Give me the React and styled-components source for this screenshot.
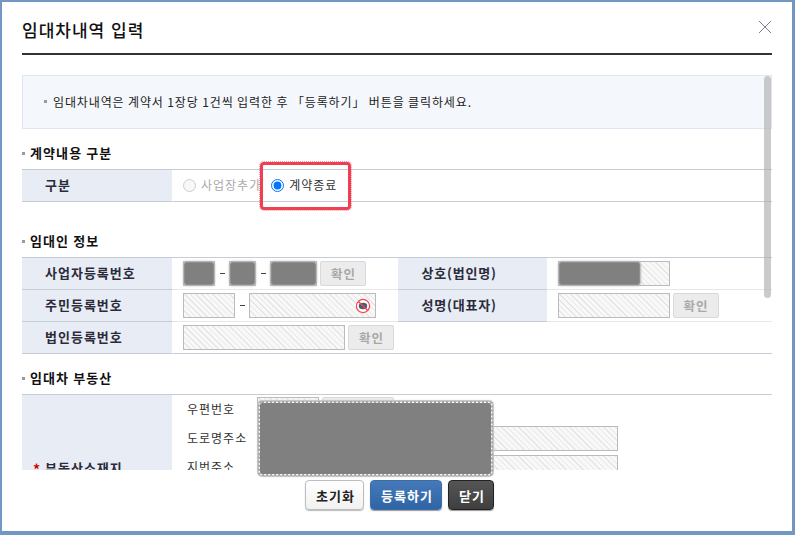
import React from 'react';
import styled, { createGlobalStyle } from 'styled-components';

const GlobalStyle = createGlobalStyle`
  html, body {
    margin: 0;
    padding: 0;
    background: #fff;
  }
  body {
    font-family: 'Noto Sans CJK KR', 'Noto Sans', sans-serif;
    font-size: 12px;
    color: #222;
  }
  * {
    box-sizing: border-box;
  }
`;

const App = () => {
  return (
    <Panel>
      <GlobalStyle />
      <Header>
        <Title>임대차내역 입력</Title>
        <CloseButton aria-label="닫기">
          <svg width="14" height="14" viewBox="0 0 14 14">
            <path d="M1 1L13 13M13 1L1 13" stroke="#5a6478" strokeWidth="0.8" fill="none" />
          </svg>
        </CloseButton>
      </Header>

      <Body>
        <Notice>
          <NoticeText>임대차내역은 계약서 1장당 1건씩 입력한 후 「등록하기」 버튼을 클릭하세요.</NoticeText>
        </Notice>

        <SectionTitle>계약내용 구분</SectionTitle>
        <Table $after={31}>
          <tbody>
            <tr>
              <Th>구분</Th>
              <Td colSpan={3} $last>
                <Cell>
                  <RadioLabel $disabled>
                    <input type="radio" name="kind" disabled />
                    사업장추가
                  </RadioLabel>
                  <RadioLabel>
                    <input type="radio" name="kind" defaultChecked />
                    계약종료
                    <Highlight />
                  </RadioLabel>
                </Cell>
              </Td>
            </tr>
          </tbody>
        </Table>

        <SectionTitle>임대인 정보</SectionTitle>
        <Table $after={15}>
          <tbody>
            <tr>
              <Th>사업자등록번호</Th>
              <Td>
                <Cell>
                  <Field $w={32}><Redact /></Field>
                  <Dash />
                  <Field $w={27}><Redact /></Field>
                  <Dash />
                  <Field $w={47}><Redact /></Field>
                  <CheckButton>확인</CheckButton>
                </Cell>
              </Td>
              <Th $side>상호(법인명)</Th>
              <Td>
                <Cell>
                  <Field $w={112}><Redact $w={79} /></Field>
                </Cell>
              </Td>
            </tr>
            <tr>
              <Th>주민등록번호</Th>
              <Td>
                <Cell>
                  <Field $w={52} />
                  <Dash />
                  <Field $w={127}>
                    <EyeIcon viewBox="0 0 16 16">
                      <circle cx="8" cy="8" r="6.6" fill="#fff" stroke="#f04848" strokeWidth="1.2" />
                      <ellipse cx="8" cy="8" rx="4.2" ry="3.2" fill="#4d5a74" />
                      <path d="M3.4 3.4L12.6 12.6" stroke="#f04848" strokeWidth="1.4" />
                    </EyeIcon>
                  </Field>
                </Cell>
              </Td>
              <Th $side>성명(대표자)</Th>
              <Td>
                <Cell>
                  <Field $w={112} />
                  <CheckButton>확인</CheckButton>
                </Cell>
              </Td>
            </tr>
            <tr>
              <Th>법인등록번호</Th>
              <Td colSpan={3} $last>
                <Cell>
                  <Field $w={162} />
                  <CheckButton>확인</CheckButton>
                </Cell>
              </Td>
            </tr>
          </tbody>
        </Table>

        <SectionTitle $below={8}>임대차 부동산</SectionTitle>
        <Table>
          <tbody>
            <tr>
              <Th $tall>
                <Star>*</Star>부동산소재지
              </Th>
              <Td colSpan={3} $top>
                <AddressGrid>
                  <AddressLabel>우편번호</AddressLabel>
                  <AddressRow>
                    <Field $w={62} />
                    <CheckButton $w={72} aria-label="우편번호 검색" />
                  </AddressRow>
                  <AddressLabel>도로명주소</AddressLabel>
                  <AddressRow>
                    <Field $w={361} />
                  </AddressRow>
                  <AddressLabel>지번주소</AddressLabel>
                  <AddressRow>
                    <Field $w={361} />
                  </AddressRow>
                </AddressGrid>
              </Td>
            </tr>
          </tbody>
        </Table>

        <ScrollThumb />
      </Body>

      <BigRedact />

      <Footer>
        <FooterButton $kind="light" $w={59}>초기화</FooterButton>
        <FooterButton $kind="primary" $w={72}>등록하기</FooterButton>
        <FooterButton $kind="dark" $w={46}>닫기</FooterButton>
      </Footer>
    </Panel>
  );
};

export default App;

const buttonKinds = {
  light: `
    color: #222;
    background: linear-gradient(#fff, #f1f1f1);
    border-color: #bdbdbd;
    box-shadow: 0 1px 1px #bbb;
  `,
  primary: `
    color: #fff;
    background: linear-gradient(#4679b8, #2f64a6);
    border-color: #3a6dab;
    box-shadow: 0 1px 1px #999;
  `,
  dark: `
    color: #fff;
    background: linear-gradient(#555, #3f3f3f);
    border-color: #222;
    box-shadow: 0 1px 1px #999;
  `,
};

const Panel = styled.div`
  position: relative;
  display: flex;
  flex-direction: column;
  width: 795px;
  height: 535px;
  padding: 0 20px;
  background: #fff;
  border-style: solid;
  border-color: #7397c3;
  border-width: 2px 3px 4px 2px;
  overflow: hidden;
`;

const Header = styled.div`
  display: flex;
  align-items: center;
  justify-content: space-between;
  flex: none;
  height: 53px;
  padding-top: 3px;
  border-bottom: 2px solid #333;
`;

const Title = styled.h1`
  margin: 0;
  font-size: 17px;
  font-weight: 500;
  letter-spacing: 1px;
  word-spacing: 1px;
  color: #111;
`;

const CloseButton = styled.button`
  display: flex;
  width: 14px;
  height: 14px;
  margin-top: -4px;
  padding: 0;
  border: 0;
  background: none;
`;

const Body = styled.div`
  position: relative;
  flex: none;
  height: 395px;
  margin-top: 20px;
  overflow: hidden;
`;

const Notice = styled.div`
  display: flex;
  align-items: center;
  height: 54px;
  padding: 0 0 2px 21px;
  background: #f4f7fb;
  border: 1px solid #e0e6f0;
`;

const NoticeText = styled.p`
  display: flex;
  align-items: center;
  gap: 6px;
  margin: 0;
  font-size: 12px;
  letter-spacing: 0.87px;
  color: #222;
  &::before {
    content: '';
    width: 3px;
    height: 3px;
    background: #999;
  }
`;

const SectionTitle = styled.h2`
  display: flex;
  align-items: center;
  gap: 5px;
  height: 16px;
  margin: 16px 0 ${(props) => props.$below || 8}px;
  font-size: 13px;
  font-weight: 700;
  line-height: 16px;
  letter-spacing: 1.1px;
  color: #111;
  &::before {
    content: '';
    width: 3px;
    height: 3px;
    background: #999;
  }
`;

const Table = styled.table`
  width: 100%;
  margin-bottom: ${(props) => props.$after || 0}px;
  table-layout: fixed;
  border-collapse: separate;
  border-spacing: 0;
  border-top: 1px solid #c5ccd6;
`;

const Th = styled.th`
  position: relative;
  width: ${(props) => (props.$side ? 150 : 151)}px;
  height: ${(props) => (props.$tall ? 148 : 32)}px;
  padding: 0 0 2px ${(props) => (props.$side ? 24 : 23)}px;
  font-size: 13px;
  font-weight: 700;
  letter-spacing: ${(props) => (props.$side ? 0.8 : 1)}px;
  text-align: left;
  color: #2b2b3a;
  background: #e8ecf5;
  border-right: 1px solid #fff;
  border-bottom: 1px solid #c5ccd6;
`;

const Td = styled.td`
  padding: ${(props) => (props.$top ? '2px' : '0')} 0 0 10px;
  vertical-align: ${(props) => (props.$top ? 'top' : 'middle')};
  border-bottom: 1px solid ${(props) => (props.$last ? '#c5ccd6' : '#e8e8e8')};
`;

const Cell = styled.div`
  display: flex;
  align-items: center;
`;

const RadioLabel = styled.label`
  position: relative;
  display: flex;
  align-items: center;
  gap: 5px;
  margin-right: 10px;
  padding-bottom: 2px;
  font-size: 12px;
  letter-spacing: 1px;
  color: ${(props) => (props.$disabled ? '#aaa' : '#333')};
  input {
    position: relative;
    top: 1px;
    width: 13px;
    height: 13px;
    margin: 0;
  }
`;

const Highlight = styled.span`
  position: absolute;
  top: -14px;
  left: -11px;
  width: 91px;
  height: 48px;
  border: 3px solid #ee3f53;
  border-radius: 4px;
  outline: 1px dotted rgba(238, 63, 83, 0.55);
  filter: blur(0.6px);
  pointer-events: none;
`;

const Field = styled.div`
  position: relative;
  flex: none;
  width: ${(props) => props.$w}px;
  height: 25px;
  background: repeating-linear-gradient(45deg, #e6e6e6 0 1px, #f8f8f8 1px 4px);
  border: 1px solid #bbb;
`;

const Redact = styled.span`
  position: absolute;
  top: 1px;
  left: 1px;
  width: ${(props) => (props.$w ? `${props.$w}px` : 'calc(100% - 2px)')};
  height: 21px;
  background: #808080;
  border-radius: 2px;
  box-shadow: 0 0 0 1px #8e8e8e, 0 0 2px 2px #b5b5b5;
`;

const BigRedact = styled.div`
  position: absolute;
  top: 399px;
  left: 256px;
  width: 235px;
  height: 75px;
  background: #808080 padding-box;
  border: 2px dotted #a6a6a6;
  border-radius: 4px;
  box-shadow: 0 0 1px 1px #c4c4c4;
  filter: blur(0.5px);
`;

const Dash = styled.span`
  flex: none;
  width: 5px;
  height: 1px;
  margin: 0 4.5px;
  background: #444;
`;

const CheckButton = styled.button`
  flex: none;
  width: ${(props) => props.$w || 46}px;
  height: 25px;
  margin-left: 3px;
  padding: 0 0 0 1px;
  font-family: inherit;
  font-size: 12.5px;
  font-weight: 700;
  letter-spacing: 1px;
  color: #a8a8a8;
  background: #ececec;
  border: 1px solid #d9d9d9;
  border-radius: 2px;
`;

const EyeIcon = styled.svg`
  position: absolute;
  top: 4px;
  right: 4px;
  width: 16px;
  height: 16px;
`;

const Star = styled.span`
  position: absolute;
  top: 50%;
  left: 11px;
  margin-top: -7px;
  font-size: 14px;
  line-height: 14px;
  color: #d40000;
`;

const AddressGrid = styled.div`
  display: grid;
  grid-template-columns: 70px auto;
  row-gap: 4px;
  align-items: center;
  padding-left: 4px;
`;

const AddressLabel = styled.span`
  padding-bottom: 2px;
  font-size: 12px;
  letter-spacing: 1px;
  color: #333;
`;

const AddressRow = styled.div`
  display: flex;
  align-items: center;
`;

const ScrollThumb = styled.div`
  position: absolute;
  top: 1px;
  right: 1px;
  width: 7px;
  height: 222px;
  background: rgba(175, 175, 175, 0.65);
  border-radius: 4px;
`;

const Footer = styled.div`
  display: flex;
  justify-content: center;
  gap: 6px;
  margin-top: 10px;
  padding-left: 5px;
`;

const FooterButton = styled.button`
  width: ${(props) => props.$w}px;
  height: 30px;
  padding: 0 0 0 2px;
  font-family: inherit;
  font-size: 13px;
  font-weight: 700;
  letter-spacing: 1px;
  border: 1px solid;
  border-radius: 4px;
  ${(props) => buttonKinds[props.$kind]}
`;
